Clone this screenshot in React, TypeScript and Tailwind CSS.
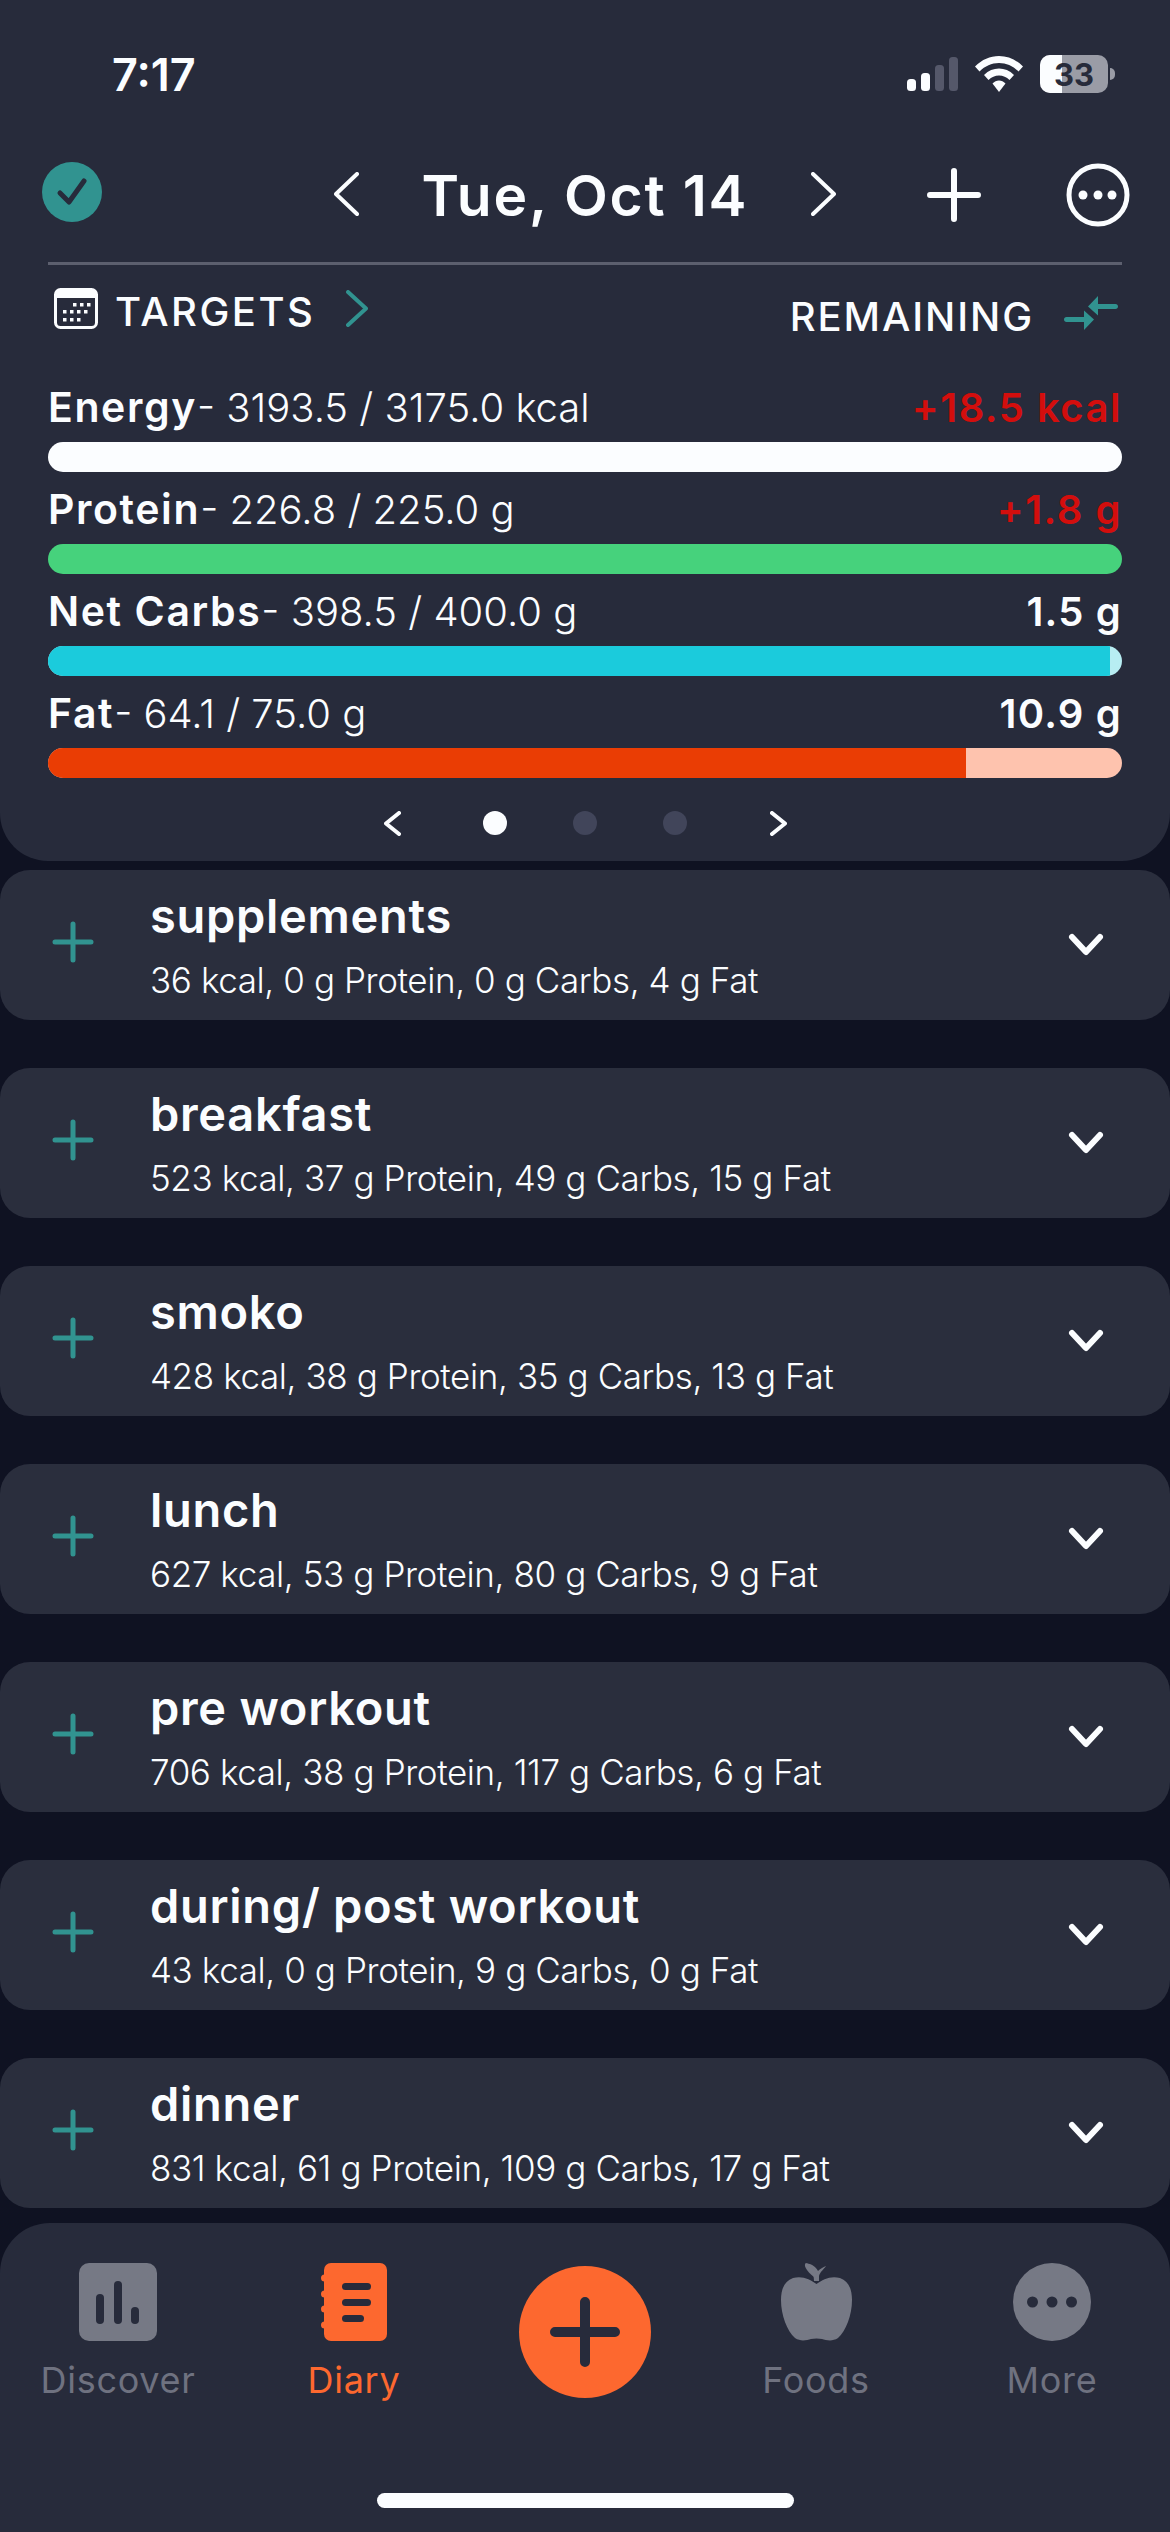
import React from 'react';

const macros = [
  { name: 'Energy', detail: '- 3193.5 / 3175.0 kcal', left: '+18.5 kcal', over: true, pct: 100, fill: 'bg-[#fbfdff]', track: 'bg-[#fbfdff]' },
  { name: 'Protein', detail: '- 226.8 / 225.0 g', left: '+1.8 g', over: true, pct: 100, fill: 'bg-[#46d27c]', track: 'bg-[#46d27c]' },
  { name: 'Net Carbs', detail: '- 398.5 / 400.0 g', left: '1.5 g', over: false, pct: 98.9, fill: 'bg-[#1bcbdc]', track: 'bg-[#b7edf2]' },
  { name: 'Fat', detail: '- 64.1 / 75.0 g', left: '10.9 g', over: false, pct: 85.5, fill: 'bg-[#ea3d04]', track: 'bg-[#fec3ae]' },
];

const meals = [
  { name: 'supplements', info: '36 kcal, 0 g Protein, 0 g Carbs, 4 g Fat' },
  { name: 'breakfast', info: '523 kcal, 37 g Protein, 49 g Carbs, 15 g Fat' },
  { name: 'smoko', info: '428 kcal, 38 g Protein, 35 g Carbs, 13 g Fat' },
  { name: 'lunch', info: '627 kcal, 53 g Protein, 80 g Carbs, 9 g Fat' },
  { name: 'pre workout', info: '706 kcal, 38 g Protein, 117 g Carbs, 6 g Fat' },
  { name: 'during/ post workout', info: '43 kcal, 0 g Protein, 9 g Carbs, 0 g Fat' },
  { name: 'dinner', info: '831 kcal, 61 g Protein, 109 g Carbs, 17 g Fat' },
];

const Chevron: React.FC<{ dir: 'left' | 'right'; w: number; h: number; color?: string; sw?: number }> = ({ dir, w, h, color = '#fbfdff', sw = 5 }) => (
  <svg width={w + sw} height={h + sw} viewBox={`0 0 ${w + sw} ${h + sw}`} fill="none" stroke={color} strokeWidth={sw} strokeLinecap="round" strokeLinejoin="round">
    {dir === 'left' ? (
      <path d={`M${w + sw / 2} ${sw / 2} L${sw / 2} ${h / 2 + sw / 2} L${w + sw / 2} ${h + sw / 2}`} />
    ) : (
      <path d={`M${sw / 2} ${sw / 2} L${w + sw / 2} ${h / 2 + sw / 2} L${sw / 2} ${h + sw / 2}`} />
    )}
  </svg>
);

const StatusBar = () => (
  <div className="flex items-center h-[68px] mt-[40px] pl-[112px]">
    <span className="text-[45px] leading-none font-semibold text-[#fbfdff]">7:17</span>
    <div className="ml-auto mr-[55px] flex items-center">
      <svg width="51" height="34" viewBox="0 0 51 34">
        <rect x="0" y="22" width="9" height="12" rx="3.5" fill="#fbfdff" />
        <rect x="14" y="16" width="9" height="18" rx="3.5" fill="#fbfdff" />
        <rect x="28" y="8" width="9" height="26" rx="3.5" fill="#55586a" />
        <rect x="42" y="0" width="9" height="34" rx="3.5" fill="#55586a" />
      </svg>
      <svg className="ml-[17px]" width="48" height="36" viewBox="0 0 48 36" fill="#fbfdff">
        <path d="M24 0C15 0 7 3.500 0 10.500L4.500 15.500C10 10 16.500 7 24 7C31.500 7 38 10 43.500 15.500L48 10.500C41 3.500 33 0 24 0Z" />
        <path d="M24 12.500C18.500 12.500 13.500 14.500 9 19L13.500 24C16.500 21 20 19.500 24 19.500C28 19.500 31.500 21 34.500 24L39 19C34.500 14.500 29.500 12.500 24 12.500Z" />
        <path d="M24 24.500C21.500 24.500 19.500 25.500 17.500 27.500L24 36L30.500 27.500C28.500 25.500 26.500 24.500 24 24.500Z" />
      </svg>
      <div className="relative ml-[17px] w-[68px] h-[38px] rounded-[10px] overflow-hidden bg-[#9a9ca6] flex items-center justify-center">
        <div className="absolute inset-y-0 left-0 w-[22px] bg-[#fbfdff]" />
        <span className="relative text-[31px] leading-none font-bold text-[#272b3b]">33</span>
      </div>
      <div className="ml-[2px] w-[5px] h-[12px] rounded-r-full bg-[#9a9ca6]" />
    </div>
  </div>
);

const DateRow = () => (
  <div className="flex items-center h-[90px] mt-[42px] pl-[42px]">
    <svg className="mb-[7px]" width="60" height="60" viewBox="0 0 60 60" fill="none">
      <circle cx="30" cy="30" r="30" fill="#319390" />
      <path d="M18 31L27 40L42 19" stroke="#272b3b" strokeWidth="5" strokeLinecap="round" strokeLinejoin="round" />
    </svg>
    <div className="ml-[232px] mb-[2px]">
      <Chevron dir="left" w={21} h={40} sw={4} />
    </div>
    <div className="w-[452px] text-center text-[57px] leading-none font-semibold text-[#fbfdff] tracking-[1.8px]">Tue, Oct 14</div>
    <div className="mb-[2px]">
      <Chevron dir="right" w={21} h={40} sw={4} />
    </div>
    <svg className="ml-[91px]" width="54" height="54" viewBox="0 0 54 54" stroke="#fbfdff" strokeWidth="6" strokeLinecap="round">
      <path d="M27 3V51M3 27H51" />
    </svg>
    <svg className="ml-[85px]" width="64" height="64" viewBox="0 0 64 64" fill="none">
      <circle cx="32" cy="32" r="29" stroke="#fbfdff" strokeWidth="5" />
      <circle cx="17" cy="32" r="4.500" fill="#fbfdff" />
      <circle cx="32" cy="32" r="4.500" fill="#fbfdff" />
      <circle cx="46" cy="32" r="4.500" fill="#fbfdff" />
    </svg>
  </div>
);

const TargetsRow = () => (
  <div className="flex items-start h-[72px] mt-[23px] pl-[54px] pr-[52px]">
    <svg width="44" height="41" viewBox="0 0 44 41" fill="none">
      <rect x="1.500" y="1.500" width="41" height="38" rx="5" fill="#272b3b" stroke="#fbfdff" strokeWidth="3" />
      <path d="M3 3H41V10H3Z" fill="#fbfdff" />
      <g fill="#fbfdff">
        <rect x="19" y="15" width="3.500" height="3.500" />
        <rect x="26" y="15" width="3.500" height="3.500" />
        <rect x="33" y="15" width="3.500" height="3.500" />
        <rect x="9" y="22" width="3.500" height="3.500" />
        <rect x="16" y="22" width="3.500" height="3.500" />
        <rect x="23" y="22" width="3.500" height="3.500" />
        <rect x="30" y="22" width="3.500" height="3.500" />
        <rect x="9" y="30" width="3.500" height="3.500" />
        <rect x="16" y="30" width="3.500" height="3.500" />
        <rect x="23" y="30" width="3.500" height="3.500" />
      </g>
    </svg>
    <span className="ml-[17px] text-[40px] leading-[48px] font-medium tracking-[2.5px] text-[#fbfdff]">TARGETS</span>
    <div className="ml-[31px] mt-[2px]">
      <Chevron dir="right" w={18} h={33} color="#319390" sw={4} />
    </div>
    <span className="ml-auto mt-[5px] text-[40px] leading-[48px] font-medium tracking-[1.9px] text-[#fbfdff]">REMAINING</span>
    <svg className="ml-[30px] mt-[8px]" width="54" height="34" viewBox="0 0 54 34" fill="#319390">
      <path d="M54 10.500C54 12 53 13 51.500 13H34V19.500L24 10.500L34 0V8H51.500C53 8 54 9 54 10.500Z" />
      <path d="M0 23.500C0 22 1 21 2.500 21H20V14.500L30 23.500L20 34V26H2.500C1 26 0 25 0 23.500Z" />
    </svg>
  </div>
);

const MacroRow: React.FC<{ m: (typeof macros)[number] }> = ({ m }) => (
  <div className="flex flex-col">
    <div className="flex items-center justify-between h-[72px] pt-[3px] text-[40px] leading-none">
      <div className="text-[#fbfdff]">
        <span className="text-[41px] font-semibold tracking-[1.6px]">{m.name}</span>
        <span className="font-light">{m.detail}</span>
      </div>
      <span className={m.over ? 'font-semibold tracking-[1.5px] text-[#d30e0d]' : 'font-semibold tracking-[1.2px] text-[#fbfdff]'}>{m.left}</span>
    </div>
    <div className={`h-[30px] rounded-[15px] overflow-hidden ${m.track}`}>
      <div className={`h-full ${m.fill}`} style={{ width: `${m.pct}%` }} />
    </div>
  </div>
);

const Pager = () => (
  <div className="flex items-center h-[24px] mt-[33px] pl-[384px]">
    <Chevron dir="left" w={13} h={21} sw={4} />
    <div className="ml-[82px] w-[24px] h-[24px] rounded-full bg-[#fbfdff]" />
    <div className="ml-[66px] w-[24px] h-[24px] rounded-full bg-[#41455a]" />
    <div className="ml-[66px] w-[24px] h-[24px] rounded-full bg-[#41455a]" />
    <div className="ml-[83px]">
      <Chevron dir="right" w={13} h={21} sw={4} />
    </div>
  </div>
);

const MealCard: React.FC<{ name: string; info: string }> = ({ name, info }) => (
  <div className="flex items-center h-[150px] rounded-[30px] bg-[#2a2e3d] pl-[52px] pr-[66px]">
    <svg className="mb-[6px]" width="42" height="42" viewBox="0 0 42 42" stroke="#319390" strokeWidth="5" strokeLinecap="round">
      <path d="M21 3V39M3 21H39" />
    </svg>
    <div className="ml-[56px] mb-[2px] flex flex-col text-[#fbfdff]">
      <span className="text-[47px] leading-[58px] font-semibold tracking-[0.7px]">{name}</span>
      <span className="mt-[13px] text-[35px] leading-[44px] font-light tracking-[-0.4px]">{info}</span>
    </div>
    <svg className="ml-auto" width="36" height="24" viewBox="0 0 36 24" fill="none" stroke="#fbfdff" strokeWidth="6" strokeLinecap="round" strokeLinejoin="round">
      <path d="M4 4L18 19L32 4" />
    </svg>
  </div>
);

const NavLabel: React.FC<{ text: string; active?: boolean }> = ({ text, active }) => (
  <span className={active ? 'mt-[17px] text-[36px] leading-[44px] font-normal tracking-[0.7px] text-[#fd682f]' : 'mt-[17px] text-[36px] leading-[44px] font-normal tracking-[0.7px] text-[#6f7280]'}>{text}</span>
);

const BottomNav = () => (
  <div className="flex flex-col h-[309px] mt-[15px] rounded-t-[50px] bg-[#272b3b]">
    <div className="grid grid-cols-[236px_236px_226px_236px_236px] pt-[40px]">
      <div className="flex flex-col items-center">
        <svg width="78" height="78" viewBox="0 0 78 78">
          <rect width="78" height="78" rx="10" fill="#767985" />
          <g fill="#272b3b">
            <rect x="17" y="31" width="8" height="30" rx="4" />
            <rect x="35" y="18" width="8" height="43" rx="4" />
            <rect x="52" y="44" width="8" height="17" rx="4" />
          </g>
        </svg>
        <NavLabel text="Discover" />
      </div>
      <div className="flex flex-col items-center">
        <svg width="66" height="78" viewBox="0 0 66 78" fill="#fd682f">
          <rect x="3" width="63" height="78" rx="7" />
          <circle cx="3.500" cy="15" r="3.500" />
          <circle cx="3.500" cy="31" r="3.500" />
          <circle cx="3.500" cy="46" r="3.500" />
          <circle cx="3.500" cy="62" r="3.500" />
          <g fill="#272b3b">
            <rect x="21" y="20" width="29" height="7" rx="3.500" />
            <rect x="21" y="36" width="29" height="7" rx="3.500" />
            <rect x="21" y="52" width="22" height="7" rx="3.500" />
          </g>
        </svg>
        <NavLabel text="Diary" active />
      </div>
      <div className="flex justify-center">
        <div className="flex items-center justify-center mt-[3px] w-[132px] h-[132px] rounded-full bg-[#fd682f]">
          <svg width="70" height="70" viewBox="0 0 70 70" stroke="#272b3b" strokeWidth="10" strokeLinecap="round">
            <path d="M35 5V65M5 35H65" />
          </svg>
        </div>
      </div>
      <div className="flex flex-col items-center">
        <svg width="71" height="78" viewBox="0 0 71 78" fill="#767985">
          <path d="M35.500 21C29 16 21 12.500 12 15C3 18 0 27 0 37C0 52 6 68 14 75C20 79 26 77 30 76C33 75.300 38 75.300 41 76C45 77 51 79 57 75C65 68 71 52 71 37C71 27 68 18 59 15C50 12.500 42 16 35.500 21Z" />
          <path d="M33 18C33 12 31 6 26 0.500C31 1 35 4 37 8C39 6 42 4 45 3C43 6 39 9 38 13V18Z" />
          <path d="M25 0C22 1.500 25 8 33 14L36 12C33 6 29 1 25 0Z" />
        </svg>
        <NavLabel text="Foods" />
      </div>
      <div className="flex flex-col items-center">
        <svg width="78" height="78" viewBox="0 0 78 78">
          <circle cx="39" cy="39" r="39" fill="#767985" />
          <circle cx="19.500" cy="39" r="5.500" fill="#272b3b" />
          <circle cx="39" cy="39" r="5.500" fill="#272b3b" />
          <circle cx="58.500" cy="39" r="5.500" fill="#272b3b" />
        </svg>
        <NavLabel text="More" />
      </div>
    </div>
    <div className="mt-auto mb-[24px] mx-auto w-[417px] h-[15px] rounded-full bg-[#fbfdff]" />
  </div>
);

export default function App() {
  return (
    <div className="flex flex-col w-[1170px] h-[2532px] overflow-hidden bg-[#0f1222] [font-family:Inter,sans-serif]">
      <div className="flex flex-col h-[861px] rounded-b-[48px] bg-[#272b3b]">
        <StatusBar />
        <DateRow />
        <div className="mx-[48px] mt-[22px] h-[3px] bg-[#5c5f6e]" />
        <TargetsRow />
        <div className="flex flex-col mt-[10px] mx-[48px]">
          {macros.map((m) => (
            <MacroRow key={m.name} m={m} />
          ))}
        </div>
        <Pager />
      </div>
      <div className="flex flex-col gap-[48px] mt-[9px]">
        {meals.map((m) => (
          <MealCard key={m.name} name={m.name} info={m.info} />
        ))}
      </div>
      <BottomNav />
    </div>
  );
}
